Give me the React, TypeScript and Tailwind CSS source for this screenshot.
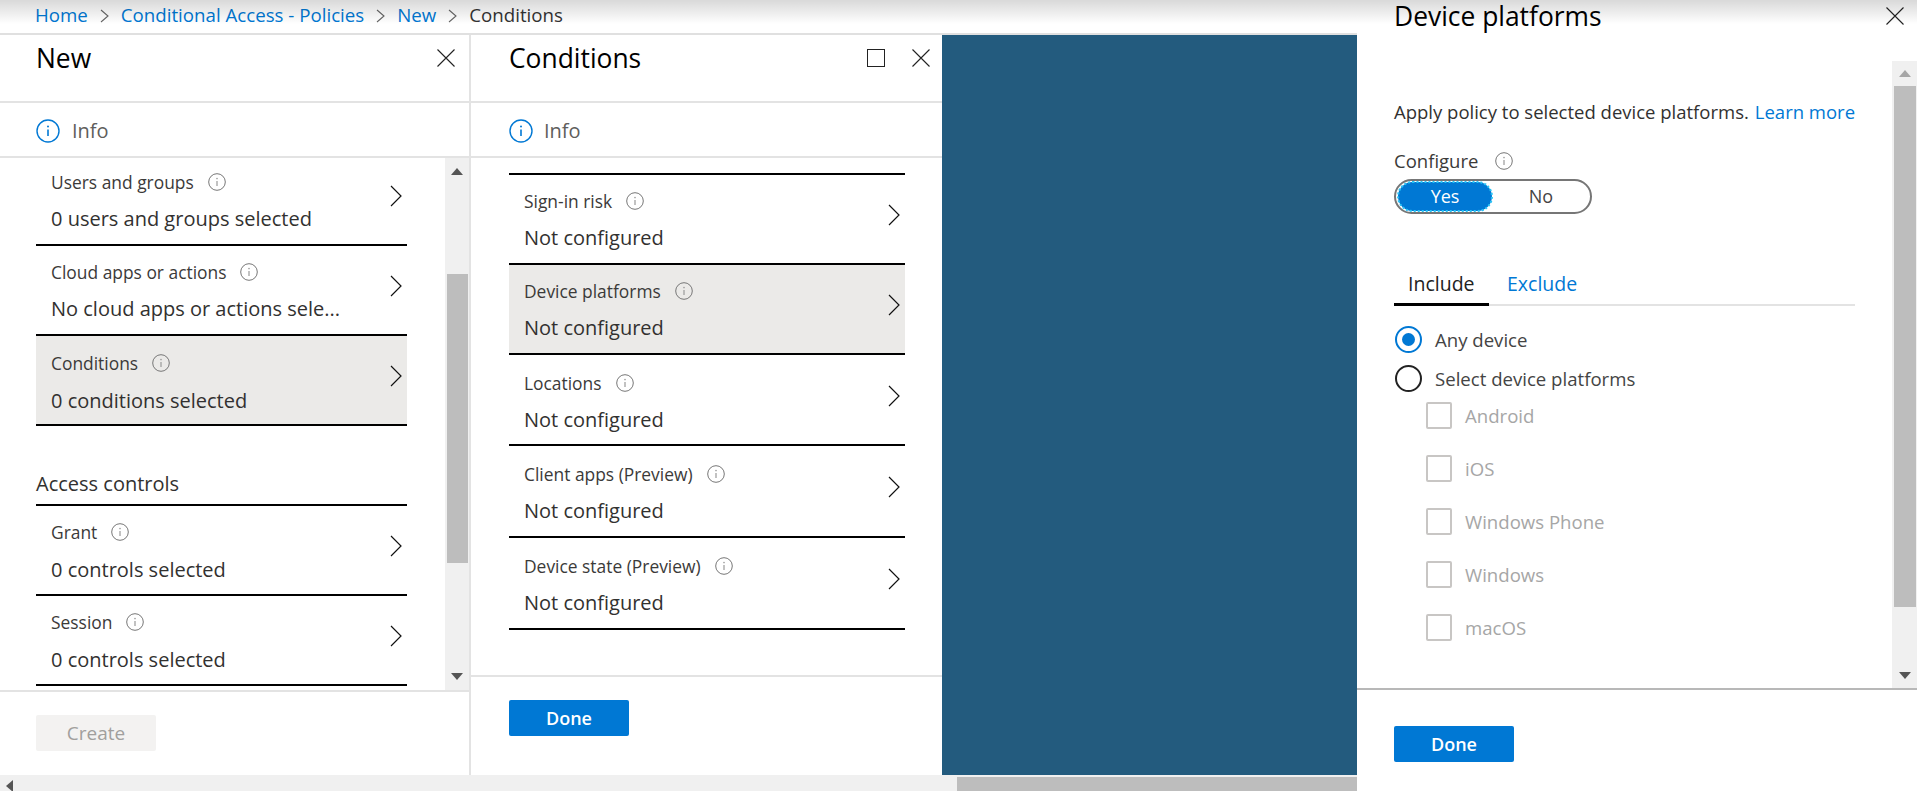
function Close({ className = "" }: { className?: string }) {
  return (
    <svg width="18" height="18" viewBox="0 0 18 18" className={className}>
      <path d="M0.5 0.5 L17.5 17.5 M17.5 0.5 L0.5 17.5" stroke="#222" strokeWidth="1.1" fill="none" />
    </svg>
  )
}

function Chevron({ className = "" }: { className?: string }) {
  return (
    <svg width="12" height="22" viewBox="0 0 12 22" className={className}>
      <path d="M1 1 L11 11 L1 21" stroke="#111" strokeWidth="1.2" fill="none" />
    </svg>
  )
}

function Crumb() {
  return (
    <svg width="9" height="14" viewBox="0 0 9 14">
      <path d="M1 1 L8 7 L1 13" stroke="#666" strokeWidth="1.1" fill="none" />
    </svg>
  )
}

function InfoSmall() {
  return (
    <svg width="18" height="18" viewBox="0 0 18 18" className="shrink-0">
      <circle cx="9" cy="9" r="8.3" stroke="#777" strokeWidth="1" fill="none" />
      <path d="M9 8 V13" stroke="#999" strokeWidth="1.2" />
      <circle cx="9" cy="5.6" r="0.8" fill="#999" />
    </svg>
  )
}

function InfoBlue() {
  return (
    <svg width="24" height="24" viewBox="0 0 24 24" className="shrink-0">
      <circle cx="12" cy="12" r="11" stroke="#0078d4" strokeWidth="1.4" fill="none" />
      <path d="M12 10.5 V17" stroke="#0078d4" strokeWidth="1.6" />
      <circle cx="12" cy="7.6" r="1" fill="#0078d4" />
    </svg>
  )
}

function Arrow({ up, color = "#555" }: { up?: boolean; color?: string }) {
  return (
    <svg width="12" height="7" viewBox="0 0 12 7">
      <path d={up ? "M0 7 L6 0 L12 7 Z" : "M0 0 L6 7 L12 0 Z"} fill={color} />
    </svg>
  )
}

type RowProps = {
  label: string
  value: string
  active?: boolean
  className?: string
  pad?: string
  gap?: string
  chev?: string
}

function Row({ label, value, active, className = "h-[90px]", pad = "pt-[16px]", gap = "mt-[14px]", chev = "mt-[29px]" }: RowProps) {
  return (
    <div className={`${className} flex border-b-2 border-black pl-[15px] pr-[5px] justify-between ${active ? "bg-[#ebeae8]" : ""}`}>
      <div className={pad}>
        <div className="flex items-center gap-[14px] h-[20px] text-[17.4px] font-medium text-[#3b3a39] whitespace-nowrap">
          {label}
          <InfoSmall />
        </div>
        <div className={`${gap} h-[26px] leading-[26px] text-[20px] text-[#323130] whitespace-nowrap`}>{value}</div>
      </div>
      <Chevron className={chev} />
    </div>
  )
}

function Header({ title, max }: { title: string; max?: boolean }) {
  return (
    <div className={`h-[68px] shrink-0 border-b-2 border-[#e3e3e3] flex items-start justify-between pt-[7px] ${max ? "pl-[38px] pr-[12px]" : "pl-[36px] pr-[14px]"}`}>
      <div className="text-[26.4px] leading-[32px] font-medium text-black">{title}</div>
      <div className="flex items-center gap-[27px] mt-[7px]">
        {max && <div className="w-[18px] h-[18px] border border-[#222]" />}
        <Close />
      </div>
    </div>
  )
}

function Info({ wide }: { wide?: boolean }) {
  return (
    <div className={`h-[55px] shrink-0 border-b-2 border-[#e3e3e3] flex items-center pt-[2px] text-[20px] text-[#605e5c] ${wide ? "pl-[38px] gap-[11px]" : "pl-[36px] gap-[12px]"}`}>
      <InfoBlue />
      Info
    </div>
  )
}

export default function App() {
  return (
    <div className="relative w-[1917px] h-[791px] flex overflow-hidden bg-white" style={{ fontFamily: '"Open Sans", "Noto Sans", sans-serif' }}>
      <div className="w-[1357px] shrink-0 flex flex-col">
        <div className="h-[35px] shrink-0 border-b-2 border-[#e0e0e0] flex items-center pl-[35px] pb-[2px] text-[18.7px] text-[#0078d4] whitespace-nowrap">
          <span>Home</span>
          <span className="mx-[12px]"><Crumb /></span>
          <span>Conditional Access - Policies</span>
          <span className="mx-[12px]"><Crumb /></span>
          <span>New</span>
          <span className="mx-[12px]"><Crumb /></span>
          <span className="text-[#333]">Conditions</span>
        </div>

        <div className="flex-1 flex min-h-0">
          {/* New blade */}
          <div className="w-[471px] shrink-0 border-r-2 border-[#e3e3e3] flex flex-col">
            <Header title="New" />
            <Info />
            <div className="h-[532px] shrink-0 flex">
              <div className="w-[445px] overflow-hidden">
                <div className="w-[371px] ml-[36px] -mt-[2px]">
                  <Row label="Users and groups" value="0 users and groups selected" />
                  <Row label="Cloud apps or actions" value="No cloud apps or actions sele..." />
                  <Row label="Conditions" value="0 conditions selected" active pad="pt-[17px]" gap="mt-[15px]" />
                  <div className="h-[80px] border-b-2 border-black flex items-end pb-[5px] text-[20px] text-[#323130]">Access controls</div>
                  <Row label="Grant" value="0 controls selected" gap="mt-[15px]" />
                  <Row label="Session" value="0 controls selected" gap="mt-[15px]" />
                </div>
              </div>
              <div className="w-[24px] bg-[#f0f0f0] flex flex-col items-center">
                <div className="h-[26px] flex items-center justify-center"><Arrow up /></div>
                <div className="mt-[90px] w-[21px] h-[289px] bg-[#bdbdbd]" />
                <div className="flex-1 flex items-end justify-center pb-[10px]"><Arrow /></div>
              </div>
            </div>
            <div className="flex-1 border-t-2 border-[#e3e3e3] pl-[36px] pt-[23px]">
              <button className="w-[120px] h-[36px] rounded-[2px] bg-[#f3f2f1] text-[19px] font-medium text-[#a19f9d]">Create</button>
            </div>
          </div>

          {/* Conditions blade */}
          <div className="w-[471px] shrink-0 flex flex-col bg-white">
            <Header title="Conditions" max />
            <Info wide />
            <div className="h-[517px] shrink-0 pl-[38px] pr-[37px] pt-[15px] overflow-hidden">
              <div className="border-t-2 border-black">
                <Row label="Sign-in risk" value="Not configured" />
                <Row label="Device platforms" value="Not configured" active />
                <Row label="Locations" value="Not configured" className="h-[91px]" pad="pt-[18px]" chev="mt-[30px]" />
                <Row label="Client apps (Preview)" value="Not configured" className="h-[92px]" pad="pt-[18px]" chev="mt-[30px]" />
                <Row label="Device state (Preview)" value="Not configured" className="h-[92px]" pad="pt-[18px]" chev="mt-[30px]" />
              </div>
            </div>
            <div className="flex-1 border-t-2 border-[#e3e3e3] pl-[38px] pt-[23px]">
              <button className="w-[120px] h-[36px] rounded-[2px] bg-[#0078d4] text-[18px] font-semibold text-white">Done</button>
            </div>
          </div>

          <div className="flex-1 bg-[#235b7e]" />
        </div>

        <div className="h-[16px] shrink-0 bg-[#f0f0f0] flex">
          <div className="w-[957px] pl-[6px] flex items-center pt-[6px]">
            <svg width="7" height="12" viewBox="0 0 7 12"><path d="M7 0 L0 6 L7 12 Z" fill="#555" /></svg>
          </div>
          <div className="flex-1 mt-[2px] bg-[#bdbdbd]" />
        </div>
      </div>

      {/* Device platforms blade */}
      <div className="flex-1 flex flex-col bg-white text-[#323130]">
        <div className="h-[61px] shrink-0 flex justify-between items-start pl-[37px] pr-[13px]">
          <div className="text-[26.4px] leading-[32px] font-medium text-black">Device platforms</div>
          <Close className="mt-[7px]" />
        </div>
        <div className="h-[627px] shrink-0 flex">
          <div className="w-[535px] pl-[37px] pr-[37px] pt-[38px]">
            <div className="h-[26px] flex items-center text-[18.5px] whitespace-nowrap">
              Apply policy to selected device platforms.
              <span className="ml-[6px] text-[#0078d4]">Learn more</span>
            </div>
            <div className="mt-[24px] h-[24px] flex items-center gap-[17px] text-[18.5px] font-medium text-[#3b3a39]">
              Configure
              <InfoSmall />
            </div>
            <div className="mt-[6px] w-[198px] h-[35px] rounded-full border-2 border-[#767676] flex items-center pl-[2px]">
              <div className="w-[94px] h-[29px] rounded-full bg-[#0078d4] outline-2 outline-dotted outline-[#29c4f5] -outline-offset-1 text-white text-[18px] flex items-center justify-center">Yes</div>
              <div className="flex-1 text-center text-[18px] text-[#444]">No</div>
            </div>
            <div className="mt-[52px] h-[40px] border-b-2 border-[#e3e3e3] flex text-[19.5px]">
              <div className="w-[95px] h-[40px] border-b-[3px] border-black pl-[14px] leading-[36px] text-[#222]">Include</div>
              <div className="ml-[18px] leading-[36px] text-[#0078d4]">Exclude</div>
            </div>
            <div className="mt-[20px] h-[27px] flex items-center gap-[13px] text-[18.6px] text-[#444]">
              <div className="w-[27px] h-[27px] ml-[1px] rounded-full border-2 border-[#0078d4] flex items-center justify-center">
                <div className="w-[13px] h-[13px] rounded-full bg-[#0078d4]" />
              </div>
              Any device
            </div>
            <div className="mt-[12px] h-[27px] flex items-center gap-[13px] text-[18.6px] text-[#444]">
              <div className="w-[27px] h-[27px] ml-[1px] rounded-full border-2 border-[#222]" />
              Select device platforms
            </div>
            <div className="mt-[10px] ml-[32px] flex flex-col gap-[26px] text-[18.6px] text-[#a6a6a6]">
              {["Android", "iOS", "Windows Phone", "Windows", "macOS"].map(name => (
                <div key={name} className="h-[27px] flex items-center gap-[13px]">
                  <div className="w-[26px] h-[27px] rounded-[2px] border-2 border-[#c8c6c4]" />
                  {name}
                </div>
              ))}
            </div>
          </div>
          <div className="w-[25px] bg-[#f0f0f0] flex flex-col items-center">
            <div className="h-[25px] flex items-center justify-center"><Arrow up color="#a6a6a6" /></div>
            <div className="w-[22px] h-[521px] bg-[#bdbdbd]" />
            <div className="flex-1 flex items-end justify-center pb-[9px]"><Arrow /></div>
          </div>
        </div>
        <div className="flex-1 border-t-2 border-[#b8b8b8] pl-[37px] pt-[36px]">
          <button className="w-[120px] h-[36px] rounded-[2px] bg-[#0078d4] text-[18px] font-semibold text-white">Done</button>
        </div>
      </div>

      {/* shadow cast by the portal header */}
      <div className="absolute top-0 left-0 right-0 h-[24px] bg-gradient-to-b from-black/15 to-transparent pointer-events-none" />
    </div>
  )
}
